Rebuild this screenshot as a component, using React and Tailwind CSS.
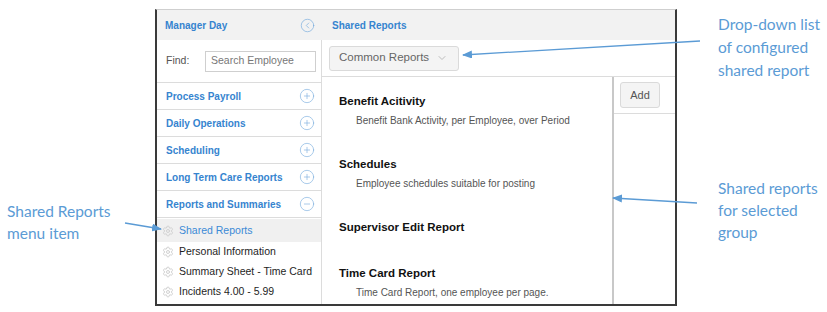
import React from "react";
import { CirclePlus, CircleMinus, CircleChevronLeft, ChevronDown, Settings } from "lucide-react";

const MENU = [
  { id: "payroll", text: "Process Payroll", open: false },
  { id: "daily", text: "Daily Operations", open: false },
  { id: "sched", text: "Scheduling", open: false },
  { id: "ltc", text: "Long Term Care Reports", open: false },
  { id: "reports", text: "Reports and Summaries", open: true },
];

const SUB_ITEMS = [
  { id: "shared", text: "Shared Reports", active: true },
  { id: "personal", text: "Personal Information" },
  { id: "summary", text: "Summary Sheet - Time Card" },
  { id: "incidents", text: "Incidents 4.00 - 5.99" },
];

const REPORTS = [
  { id: "benefit", title: "Benefit Acitivity", desc: "Benefit Bank Activity, per Employee, over Period" },
  { id: "schedules", title: "Schedules", desc: "Employee schedules suitable for posting" },
  { id: "supervisor", title: "Supervisor Edit Report", desc: "" },
  { id: "timecard", title: "Time Card Report", desc: "Time Card Report, one employee per page." },
];

function Callout({ lines, className }) {
  return (
    <div className={`font-['Lato',sans-serif] text-[15.5px] text-[#5b9bd5] ${className}`}>
      {lines.map((l) => (
        <div key={l}>{l}</div>
      ))}
    </div>
  );
}

export default function App() {
  return (
    <div className="relative w-[827px] h-[312px] bg-white flex overflow-hidden font-['Liberation_Sans',Arial,sans-serif]">
      {/* left callout */}
      <div className="w-[155px] shrink-0 pt-[200px] pl-[7px]">
        <Callout lines={["Shared Reports", "menu item"]} className="leading-[22px]" />
      </div>

      {/* app frame */}
      <div className="w-[522px] shrink-0 mt-[9px] h-[297px] border-t border-t-[#cfcfcf] border-x-2 border-b-2 border-x-[#3a3a3a] border-b-[#3a3a3a] flex flex-col">
        {/* header */}
        <div className="h-[30px] bg-[#f2f2f2] flex items-center shrink-0">
          <div className="w-[165px] flex items-center justify-between pl-[8px] pr-[7px]">
            <span className="text-[10px] font-bold text-[#3684cf]">Manager Day</span>
            <CircleChevronLeft size={15} strokeWidth={1} className="text-[#6fa6dc]" />
          </div>
          <span className="pl-[10px] text-[10px] font-bold text-[#3684cf]">Shared Reports</span>
        </div>

        <div className="flex flex-1 min-h-0">
          {/* sidebar */}
          <div className="w-[165px] shrink-0 border-r border-[#dcdcdc] flex flex-col">
            <div className="h-[43px] border-b border-[#dcdcdc] flex items-center pl-[9px]">
              <span className="w-[39px] text-[10.5px] text-[#555]">Find:</span>
              <div className="w-[111px] h-[21px] border border-[#cfcfcf] flex items-center pl-[5px] text-[10.5px] text-[#777]">
                Search Employee
              </div>
            </div>
            {MENU.map((m) => (
              <div key={m.id} className="h-[27px] border-b border-[#dcdcdc] flex items-center justify-between pl-[9px] pr-[6px]">
                <span className="text-[10px] font-bold text-[#3684cf]">{m.text}</span>
                {m.open ? (
                  <CircleMinus size={16} strokeWidth={1} className="text-[#7fb0e0]" />
                ) : (
                  <CirclePlus size={16} strokeWidth={1} className="text-[#7fb0e0]" />
                )}
              </div>
            ))}
            <div className="pt-[1px]">
              {SUB_ITEMS.map((s) => (
                <div
                  key={s.id}
                  className={`flex items-center pl-[5px] gap-[5px] ${s.active ? "h-[23px] bg-[#f0f0f0]" : "h-[20px]"}`}
                >
                  <Settings size={12} strokeWidth={2} className="text-[#d2d2d2]" />
                  <span className={`text-[10.5px] ${s.active ? "text-[#3b8ad6]" : "text-[#1e1e1e]"}`}>{s.text}</span>
                </div>
              ))}
            </div>
          </div>

          {/* main */}
          <div className="flex-1 flex flex-col min-w-0">
            <div className="h-[37px] border-b border-[#dcdcdc] flex items-center pl-[7px] shrink-0">
              <div className="w-[130px] h-[25px] bg-[#f4f4f4] border border-[#dadada] rounded-[3px] flex items-center justify-between pl-[9px] pr-[10px] text-[11.5px] text-[#666]">
                <span>Common Reports</span>
                <ChevronDown size={12} strokeWidth={1.5} className="text-[#aaa]" />
              </div>
            </div>
            <div className="flex flex-1 min-h-0">
              <div className="flex-1 border-r-2 border-[#c8c8c8] pl-[17px] pt-[16px]">
                {REPORTS.map((r) => (
                  <div key={r.id} className={r.desc ? "h-[63px]" : "h-[46px]"}>
                    <div className="text-[11.5px] leading-[16px] font-bold text-[#111]">{r.title}</div>
                    {r.desc && (
                      <div className="mt-[4px] pl-[17px] text-[10px] leading-[16px] text-[#555]">{r.desc}</div>
                    )}
                  </div>
                ))}
              </div>
              <div className="w-[61px] shrink-0">
                <div className="h-[37px] border-b border-[#dcdcdc] pt-[5px] pl-[6px]">
                  <div className="w-[40px] h-[26px] bg-[#f4f4f4] border border-[#dadada] rounded-[3px] flex items-center justify-center text-[11px] text-[#555]">
                    Add
                  </div>
                </div>
              </div>
            </div>
          </div>
        </div>
      </div>

      {/* right callouts */}
      <div className="flex-1 pl-[41px] pt-[13px] flex flex-col">
        <Callout lines={["Drop-down list", "of configured", "shared report"]} className="leading-[23px]" />
        <Callout lines={["Shared reports", "for selected", "group"]} className="mt-[95px] leading-[22px]" />
      </div>

      {/* arrows */}
      <svg className="absolute inset-0 pointer-events-none" width="827" height="312">
        <defs>
          <marker id="ah" markerWidth="10" markerHeight="8" refX="9" refY="4" orient="auto" markerUnits="userSpaceOnUse">
            <path d="M0,0 L10,4 L0,8 Z" fill="#5b9bd5" />
          </marker>
        </defs>
        <line x1="700" y1="41" x2="463" y2="55" stroke="#5b9bd5" strokeWidth="1.3" markerEnd="url(#ah)" />
        <line x1="697" y1="203" x2="613" y2="198" stroke="#5b9bd5" strokeWidth="1.3" markerEnd="url(#ah)" />
        <line x1="125" y1="223" x2="161" y2="229" stroke="#5b9bd5" strokeWidth="1.3" markerEnd="url(#ah)" />
      </svg>
    </div>
  );
}
